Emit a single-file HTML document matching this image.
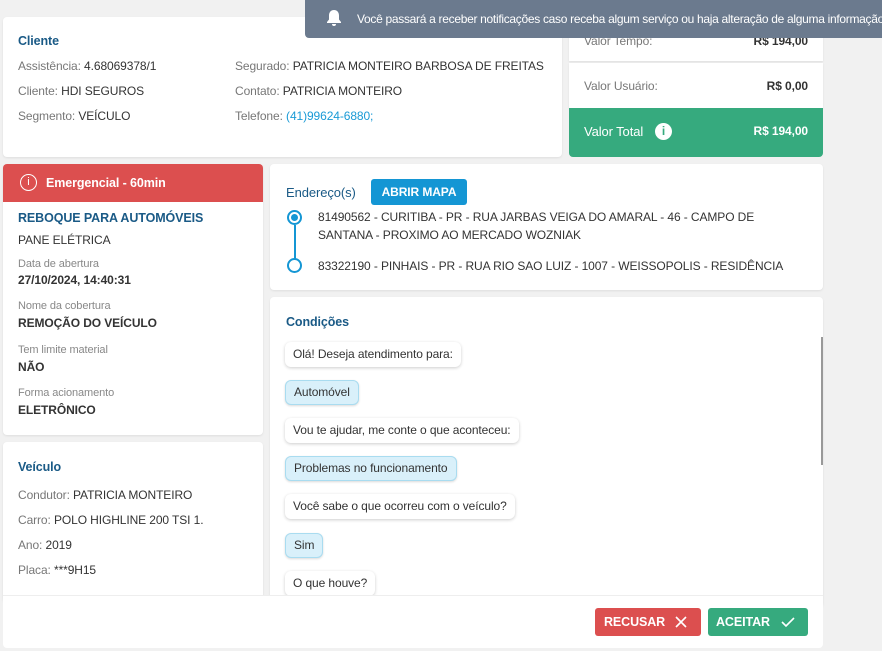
<!DOCTYPE html>
<html><head><meta charset="utf-8"><style>
*{margin:0;padding:0;box-sizing:border-box}
body{width:882px;height:651px;background:#f1f1f1;font-family:"Liberation Sans",sans-serif;font-size:12px;letter-spacing:-0.1px;color:#333;position:relative;overflow:hidden}
.c{position:absolute;background:#fff;border-radius:4px;box-shadow:0 1px 2px rgba(0,0,0,.08)}
.t{position:absolute;white-space:nowrap}
.r{position:absolute;white-space:nowrap;right:74px}
.g{color:#777}
.h{color:#1a5a86;font-weight:bold;font-size:12.5px}
.s{font-size:11px;color:#888}
.b{font-weight:bold;color:#333}
.bub{position:absolute;left:285px;height:25px;line-height:25px;padding:0 8px;border-radius:6px;background:#fff;box-shadow:0 1px 3px rgba(0,0,0,.2);white-space:nowrap}
.blue{background:#d9f0fa;box-shadow:0 1px 2px rgba(0,0,0,.15);border:1px solid #a9dcf0;line-height:23px}
</style></head><body>
<div class="c" style="left:3px;top:17px;width:559px;height:140px"></div>
<div class="t h" style="left:18px;top:34px">Cliente</div>
<div class="t" style="left:18px;top:59px"><span class="g">Assistência:</span> 4.68069378/1</div>
<div class="t" style="left:18px;top:84px"><span class="g">Cliente:</span> HDI SEGUROS</div>
<div class="t" style="left:18px;top:109px"><span class="g">Segmento:</span> VEÍCULO</div>
<div class="t" style="left:235px;top:59px"><span class="g">Segurado:</span> PATRICIA MONTEIRO BARBOSA DE FREITAS</div>
<div class="t" style="left:235px;top:84px"><span class="g">Contato:</span> PATRICIA MONTEIRO</div>
<div class="t" style="left:235px;top:109px"><span class="g">Telefone:</span> <span style="color:#1a9ad6">(41)99624-6880;</span></div>

<div class="c" style="left:569px;top:10px;width:254px;height:51px;border-radius:0"></div>
<div class="t g" style="left:584px;top:34px">Valor Tempo:</div>
<div class="r b" style="top:34px">R$ 194,00</div>
<div class="c" style="left:569px;top:63px;width:254px;height:45px;border-radius:0"></div>
<div class="t g" style="left:584px;top:79px">Valor Usuário:</div>
<div class="r b" style="top:79px">R$ 0,00</div>
<div style="position:absolute;left:569px;top:108px;width:254px;height:49px;background:#36aa7e;border-radius:0 0 4px 4px"></div>
<div class="t" style="left:584px;top:124px;color:#fff;font-size:13px">Valor Total</div>
<div style="position:absolute;left:655px;top:123px;width:17px;height:17px;border-radius:50%;background:#fff;color:#36aa7e;font-weight:bold;font-size:12px;text-align:center;line-height:17px;letter-spacing:0">i</div>
<div class="r" style="top:124px;color:#fff;font-weight:bold">R$ 194,00</div>

<div style="position:absolute;left:305px;top:0;width:577px;height:38px;background:#6b7a8e;border-radius:0 0 0 4px"></div>
<svg style="position:absolute;left:326px;top:9px" width="16" height="18" viewBox="0 0 16 18"><path d="M8 1c-3 0-5 2.3-5 5.5v4L1 13v1h14v-1l-2-2.5v-4C13 3.3 11 1 8 1z M6 15h4a2 2 0 0 1-4 0z" fill="#fff"/></svg>
<div class="t" style="left:357px;top:12px;color:#fff;font-size:12px;letter-spacing:-0.3px">Você passará a receber notificações caso receba algum serviço ou haja alteração de alguma informação</div>

<div class="c" style="left:3px;top:164px;width:260px;height:271px"></div>
<div style="position:absolute;left:3px;top:164px;width:260px;height:38px;background:#dc4f4f;border-radius:4px 4px 0 0"></div>
<div style="position:absolute;left:20px;top:174px;width:17px;height:17px;border:1.5px solid #fff;border-radius:50%;color:#fff;font-size:11px;text-align:center;line-height:14px;letter-spacing:0">i</div>
<div class="t" style="left:46px;top:176px;color:#fff;font-weight:bold;font-size:12.5px">Emergencial - 60min</div>
<div class="t h" style="left:18px;top:211px">REBOQUE PARA AUTOMÓVEIS</div>
<div class="t" style="left:18px;top:233px">PANE ELÉTRICA</div>
<div class="t s" style="left:18px;top:258px">Data de abertura</div>
<div class="t b" style="left:18px;top:273px">27/10/2024, 14:40:31</div>
<div class="t s" style="left:18px;top:300px">Nome da cobertura</div>
<div class="t b" style="left:18px;top:316px">REMOÇÃO DO VEÍCULO</div>
<div class="t s" style="left:18px;top:344px">Tem limite material</div>
<div class="t b" style="left:18px;top:360px">NÃO</div>
<div class="t s" style="left:18px;top:387px">Forma acionamento</div>
<div class="t b" style="left:18px;top:403px">ELETRÔNICO</div>

<div class="c" style="left:3px;top:442px;width:260px;height:160px"></div>
<div class="t h" style="left:18px;top:460px">Veículo</div>
<div class="t" style="left:18px;top:488px"><span class="g">Condutor:</span> PATRICIA MONTEIRO</div>
<div class="t" style="left:18px;top:513px"><span class="g">Carro:</span> POLO HIGHLINE 200 TSI 1.</div>
<div class="t" style="left:18px;top:538px"><span class="g">Ano:</span> 2019</div>
<div class="t" style="left:18px;top:563px"><span class="g">Placa:</span> ***9H15</div>

<div class="c" style="left:270px;top:164px;width:553px;height:126px"></div>
<div class="t h" style="left:286px;top:185px;font-weight:normal;font-size:13px">Endereço(s)</div>
<div style="position:absolute;left:371px;top:179px;width:96px;height:26px;background:#1496d4;border-radius:3px;color:#fff;font-weight:bold;text-align:center;line-height:26px">ABRIR MAPA</div>
<div style="position:absolute;left:287px;top:210px;width:15px;height:15px;border:2px solid #1496d4;border-radius:50%"></div>
<div style="position:absolute;left:291px;top:214px;width:7px;height:7px;background:#1496d4;border-radius:50%"></div>
<div style="position:absolute;left:294px;top:225px;width:2px;height:34px;background:#1496d4"></div>
<div style="position:absolute;left:287px;top:258px;width:15px;height:15px;border:2px solid #1496d4;border-radius:50%"></div>
<div class="t" style="left:318px;top:210px">81490562 - CURITIBA - PR - RUA JARBAS VEIGA DO AMARAL - 46 - CAMPO DE</div>
<div class="t" style="left:318px;top:228px">SANTANA - PROXIMO AO MERCADO WOZNIAK</div>
<div class="t" style="left:318px;top:259px">83322190 - PINHAIS - PR - RUA RIO SAO LUIZ - 1007 - WEISSOPOLIS - RESIDÊNCIA</div>

<div class="c" style="left:270px;top:297px;width:553px;height:310px"></div>
<div class="t h" style="left:286px;top:315px">Condições</div>
<div style="position:absolute;left:821px;top:337px;width:2px;height:128px;background:#999"></div>
<div class="bub" style="top:342px">Olá! Deseja atendimento para:</div>
<div class="bub blue" style="top:380px">Automóvel</div>
<div class="bub" style="top:418px">Vou te ajudar, me conte o que aconteceu:</div>
<div class="bub blue" style="top:456px">Problemas no funcionamento</div>
<div class="bub" style="top:494px">Você sabe o que ocorreu com o veículo?</div>
<div class="bub blue" style="top:533px">Sim</div>
<div class="bub" style="top:571px">O que houve?</div>

<div style="position:absolute;left:3px;top:595px;width:820px;height:53px;background:#fff;border-top:1px solid #eee;border-radius:0 0 4px 4px"></div>
<div style="position:absolute;left:595px;top:608px;width:106px;height:28px;background:#dc4f4f;border-radius:3px;color:#fff;font-weight:bold;line-height:28px;padding-left:9px;font-size:12.5px">RECUSAR</div>
<svg style="position:absolute;left:674px;top:615px" width="14" height="14"><path d="M2 2L12 12M12 2L2 12" stroke="#fff" stroke-width="1.6"/></svg>
<div style="position:absolute;left:708px;top:608px;width:100px;height:28px;background:#36aa7e;border-radius:3px;color:#fff;font-weight:bold;line-height:28px;padding-left:8px;font-size:12.5px">ACEITAR</div>
<svg style="position:absolute;left:780px;top:615px" width="16" height="14"><path d="M2 7L6 11L14 3" stroke="#fff" stroke-width="1.6" fill="none"/></svg>
</body></html>
